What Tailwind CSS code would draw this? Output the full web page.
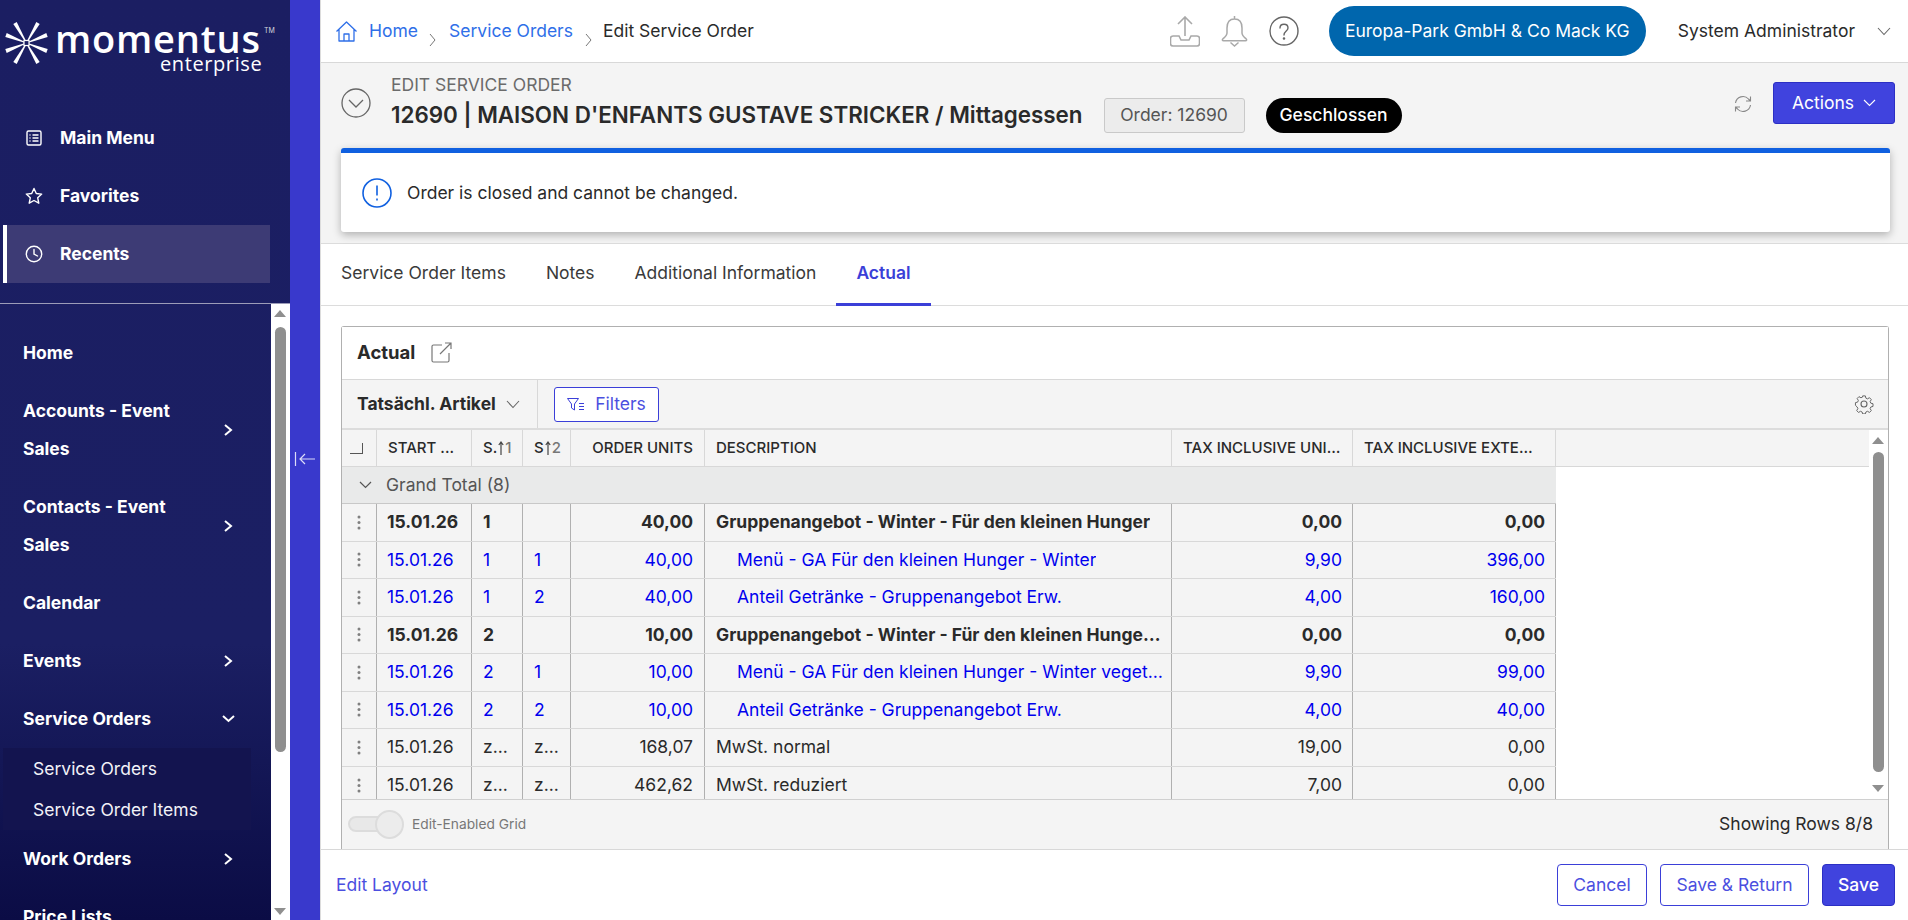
<!DOCTYPE html>
<html lang="en">
<head>
<meta charset="UTF-8" />
<title>Edit Service Order</title>
<script src="https://cdn.jsdelivr.net/npm/@tailwindcss/browser@4"></script>
</head>
<body class="h-[920px] overflow-hidden bg-white font-['Inter',sans-serif] text-[17.5px] text-[#2a2a2a]">
<div class="flex h-[920px] w-[1908px]">

  <!-- sidebar -->
  <aside class="flex h-full w-[290px] shrink-0 flex-col bg-gradient-to-b from-[#1b1e62] via-[#1b1f63] via-70% to-[#0b0c45] text-white">
    <div class="relative h-[87px] shrink-0">
      <svg class="absolute left-0 top-0" width="54" height="70" viewBox="0 0 54 70" fill="#fff">
        <g>
          <polygon points="13.300,24 16.700,22 26.900,42.800 26.100,43.200" />
          <polygon points="5.300,36.900 6.700,33.100 26.700,42.800 26.300,43.200" />
          <polygon points="39.700,24 36.300,22 26.100,42.800 26.900,43.200" />
          <polygon points="47.700,36.900 46.300,33.100 26.300,42.800 26.700,43.200" />
          <polygon points="13.300,62 16.700,64 26.900,43.200 26.100,42.800" />
          <polygon points="5.300,49.100 6.700,52.900 26.700,43.200 26.300,42.800" />
          <polygon points="39.700,62 36.300,64 26.100,43.200 26.900,42.800" />
          <polygon points="47.700,49.100 46.300,52.900 26.300,43.200 26.700,42.800" />
        </g>
        <rect x="24" y="40.500" width="5" height="5" fill="#1b1e62" stroke="#fff" stroke-width="1.2" />
      </svg>
      <span class="absolute left-[55px] top-[13px] font-['Open_Sans',sans-serif] text-[38px] leading-[50px] font-semibold tracking-[0.8px]">momentus</span>
      <span class="absolute left-[264px] top-[27px] text-[7px] leading-[8px] text-gray-300">TM</span>
      <span class="absolute left-[160px] top-[50px] font-['Open_Sans',sans-serif] text-[20px] leading-[28px] font-medium tracking-[0.6px]">enterprise</span>
    </div>
    <nav class="flex h-[216px] shrink-0 flex-col pt-[22px] pl-[3px] font-bold">
      <a class="flex h-[58px] w-[267px] items-center gap-[17px] pl-[22px]">
        <svg width="18" height="18" viewBox="0 0 18 18" fill="none" stroke="#fff" stroke-width="1.4"><rect x="2" y="2" width="14" height="14" rx="1.5"/><path d="M7.500 6h6M7.500 9h6M7.500 12h6M4.500 6h1M4.500 9h1M4.500 12h1"/></svg>
        Main Menu
      </a>
      <a class="flex h-[58px] w-[267px] items-center gap-[17px] pl-[22px]">
        <svg width="18" height="18" viewBox="0 0 18 18" fill="none" stroke="#fff" stroke-width="1.4" stroke-linejoin="round"><path d="M9 1.500l2.300 5 5.400.6-4 3.700 1.100 5.400L9 13.500l-4.800 2.700 1.100-5.400-4-3.700 5.400-.6z"/></svg>
        Favorites
      </a>
      <a class="flex h-[58px] w-[267px] items-center gap-[17px] border-l-4 border-white bg-[#3d3b75] pl-[18px]">
        <svg width="18" height="18" viewBox="0 0 18 18" fill="none" stroke="#fff" stroke-width="1.4" stroke-linecap="round"><circle cx="9" cy="9" r="7.700"/><path d="M9 4.500V9l3.500 2"/></svg>
        Recents
      </a>
    </nav>
    <div class="flex min-h-0 flex-1 border-t border-[#9c9cb8]">
      <div class="w-[271px] shrink-0 overflow-hidden pt-[20px] font-bold">
        <a class="flex h-[58px] items-center pl-[23px]">Home</a>
        <a class="flex h-[96px] items-center justify-between pl-[23px] pr-[38px] leading-[38px]"><span class="w-[170px]">Accounts - Event Sales</span>
          <svg width="10" height="14" viewBox="0 0 10 14" fill="none" stroke="#fff" stroke-width="2"><path d="M2 2l6 5-6 5"/></svg></a>
        <a class="flex h-[96px] items-center justify-between pl-[23px] pr-[38px] leading-[38px]"><span class="w-[170px]">Contacts - Event Sales</span>
          <svg width="10" height="14" viewBox="0 0 10 14" fill="none" stroke="#fff" stroke-width="2"><path d="M2 2l6 5-6 5"/></svg></a>
        <a class="flex h-[58px] items-center pl-[23px]">Calendar</a>
        <a class="flex h-[58px] items-center justify-between pl-[23px] pr-[38px]">Events
          <svg width="10" height="14" viewBox="0 0 10 14" fill="none" stroke="#fff" stroke-width="2"><path d="M2 2l6 5-6 5"/></svg></a>
        <a class="flex h-[58px] items-center justify-between pl-[23px] pr-[35px]">Service Orders
          <svg width="15" height="10" viewBox="0 0 15 10" fill="none" stroke="#fff" stroke-width="2"><path d="M2 2l5.500 5L13 2"/></svg></a>
        <div class="ml-[3px] h-[82px] w-[248px] bg-[#13144f] pl-[30px] pt-[1px] font-normal text-[#f2f2f8]">
          <div class="flex h-[41px] items-center">Service Orders</div>
          <div class="flex h-[40px] items-center">Service Order Items</div>
        </div>
        <a class="flex h-[58px] items-center justify-between pl-[23px] pr-[38px]">Work Orders
          <svg width="10" height="14" viewBox="0 0 10 14" fill="none" stroke="#fff" stroke-width="2"><path d="M2 2l6 5-6 5"/></svg></a>
        <a class="flex h-[58px] items-center pl-[23px]">Price Lists</a>
      </div>
      <div class="relative flex-1 bg-white">
        <div class="absolute left-[3px] top-[6px] h-0 w-0 border-x-[6.5px] border-b-[7px] border-x-transparent border-b-[#8f8f8f]"></div>
        <div class="absolute left-[4px] top-[23px] h-[425px] w-[11px] rounded-full bg-[#8f8f8f]"></div>
        <div class="absolute bottom-[5px] left-[3px] h-0 w-0 border-x-[6.5px] border-t-[7px] border-x-transparent border-t-[#8f8f8f]"></div>
      </div>
    </div>
  </aside>

  <!-- rail -->
  <div class="flex h-full w-[30px] shrink-0 flex-col items-center bg-[#3939cc] pt-[451px]">
    <svg width="22" height="16" viewBox="0 0 22 16" fill="none" stroke="#dcdcf8" stroke-width="1.2"><path d="M1.500 1v14M21 8H6M11 3L6 8l5 5"/></svg>
  </div>

  <!-- main -->
  <main class="flex h-full min-w-0 flex-1 flex-col border-l border-[#dcdcdc]">
    <header class="flex h-[63px] shrink-0 items-center border-b border-[#d8d8d8] pl-[14px] pr-[17px]">
      <svg class="mr-[11px]" width="23" height="23" viewBox="0 0 23 23" fill="none" stroke="#2f6fe8" stroke-width="1.3" stroke-linejoin="round"><path d="M1.500 11.500L11.500 2l10 9.500M4 9.500V21h15V9.500M9 21v-7h5v7"/></svg>
      <a class="text-[#2f6fe8]">Home</a>
      <svg class="ml-[11px] mr-[12px] mt-[18px]" width="8" height="14" viewBox="0 0 8 14" fill="none" stroke="#777" stroke-width="1"><path d="M1 1l5 6-5 6"/></svg>
      <a class="text-[#2f6fe8]">Service Orders</a>
      <svg class="ml-[12px] mr-[10px] mt-[18px]" width="8" height="14" viewBox="0 0 8 14" fill="none" stroke="#777" stroke-width="1"><path d="M1 1l5 6-5 6"/></svg>
      <span>Edit Service Order</span>
      <div class="ml-auto flex items-center">
        <svg width="30" height="31" viewBox="0 0 30 31" fill="none" stroke="#a9a9a9" stroke-width="1.6"><path d="M15 20V1M8 8l7-7 7 7M9 20H3a2.500 2.500 0 0 0-2.500 2.500v5A2.500 2.500 0 0 0 3 30h24a2.500 2.500 0 0 0 2.500-2.500v-5A2.500 2.500 0 0 0 27 20h-6l-2 4H11z"/></svg>
        <svg class="ml-[21px]" width="27" height="32" viewBox="0 0 27 32" fill="none" stroke="#a9a9a9" stroke-width="1.5"><path d="M13.500 1v3M13.500 4C8 4 6 8 6 13v5c0 2.500-2 4-4.200 6-.9.9-.4 1.800.7 1.800h22c1.100 0 1.600-.9.700-1.800C23 22 21 20.500 21 18v-5c0-5-2-9-7.500-9zM9.500 27.500l4 3.500 4-3.500"/></svg>
        <svg class="ml-[21px]" width="30" height="30" viewBox="0 0 30 30" fill="none" stroke="#666" stroke-width="1.4"><circle cx="15" cy="15" r="14"/><path d="M11 12c0-5 8-5 8 0 0 3-4 3-4 7" stroke-linecap="round"/><circle cx="15" cy="22.500" r=".6"/></svg>
        <div class="ml-[30px] flex h-[50px] w-[317px] items-center justify-center rounded-full bg-[#0066ad] text-white">Europa-Park GmbH &amp; Co Mack KG</div>
        <span class="ml-[32px]">System Administrator</span>
        <svg class="ml-[22px]" width="14" height="9" viewBox="0 0 14 9" fill="none" stroke="#666" stroke-width="1.1"><path d="M1 1l6 6.500L13 1"/></svg>
      </div>
    </header>

    <section class="h-[181px] shrink-0 border-b border-[#dcdcdc] bg-[#f4f4f4] pl-[20px] pr-[18px]">
      <div class="flex h-[85px] items-start">
        <svg class="mr-[20px] mt-[25px]" width="30" height="30" viewBox="0 0 30 30" fill="none" stroke="#666" stroke-width="1.3"><circle cx="15" cy="15" r="14"/><path d="M8 12l7 7 7-7"/></svg>
        <div class="pt-[12px]">
          <div class="leading-[20px] text-[#6b6b6b]">EDIT SERVICE ORDER</div>
          <h1 class="mt-[9px] text-[22.4px] leading-[22px] font-semibold">12690 | MAISON D'ENFANTS GUSTAVE STRICKER / Mittagessen</h1>
        </div>
        <span class="ml-[21px] mt-[35px] flex h-[35px] w-[141px] items-center justify-center rounded-[3px] border border-[#c9c9c9] bg-[#ececec] text-[#555]">Order: 12690</span>
        <span class="ml-[21px] mt-[35px] flex h-[35px] w-[136px] items-center justify-center rounded-full bg-black font-medium text-white">Geschlossen</span>
        <svg class="ml-auto mt-[32px]" width="18" height="18" viewBox="0 0 18 18" fill="none" stroke="#888" stroke-width="1.1"><path d="M1.500 8A7.500 7.500 0 0 1 14.500 4l2 2M16.500 1.500V6H12M16.500 10A7.500 7.500 0 0 1 3.500 14l-2-2M1.500 16.500V12H6"/></svg>
        <button class="-mr-[5px] ml-[21px] mt-[19px] flex h-[42px] w-[122px] items-center justify-center gap-[9px] rounded-[3px] border border-[#2c2fc4] bg-[#4043de] text-white">Actions
          <svg width="13" height="8" viewBox="0 0 13 8" fill="none" stroke="#fff" stroke-width="1.1"><path d="M1 1l5.500 5.500L12 1"/></svg></button>
      </div>
      <div class="flex h-[84px] items-center gap-[15px] rounded-[3px] border-t-[5px] border-[#1060e0] bg-white pl-[21px] shadow-[0_3px_8px_rgba(0,0,0,0.28)]">
        <svg width="30" height="30" viewBox="0 0 30 30" fill="none" stroke="#1060e0" stroke-width="1.6"><circle cx="15" cy="15" r="14"/><path d="M15 7.500v10M15 20.500v2"/></svg>
        <span class="mt-[2px]">Order is closed and cannot be changed.</span>
      </div>
    </section>

    <nav class="flex h-[62px] shrink-0 border-b border-[#dcdcdc] pb-[3px]">
      <a class="flex items-center px-[20px] text-[#3a3a3a]">Service Order Items</a>
      <a class="flex items-center px-[20px] text-[#3a3a3a]">Notes</a>
      <a class="flex items-center px-[20px] text-[#3a3a3a]">Additional Information</a>
      <a class="-mb-[4px] flex items-center border-b-[3px] border-[#3b3fd8] px-[20px] pb-[1px] font-semibold text-[#3b3fd8]">Actual</a>
    </nav>

    <section class="mx-[20px] mt-[20px] flex min-h-0 w-[1548px] flex-1 flex-col rounded-t-[3px] border-x border-t border-[#b0b0b0]">
      <div class="flex h-[53px] shrink-0 items-center border-b border-[#d8d8d8] bg-white pb-[1px] pl-[15px]">
        <span class="text-[18.5px] font-bold">Actual</span>
        <svg class="ml-[16px]" width="21" height="21" viewBox="0 0 21 21" fill="none" stroke="#777" stroke-width="1.2"><path d="M11 3H2.500A1.500 1.500 0 0 0 1 4.500v14A1.500 1.500 0 0 0 2.500 20h14a1.500 1.500 0 0 0 1.500-1.500V11M9 12L20 1M14 1h6v6"/></svg>
      </div>
      <div class="flex h-[50px] shrink-0 items-center border-b-2 border-[#dcdcdc] bg-[#f4f4f4]">
        <div class="flex h-full w-[196px] items-center border-r border-[#d8d8d8] pl-[15px]">
          <span class="font-bold">Tatsächl. Artikel</span>
          <svg class="ml-[10px]" width="14" height="9" viewBox="0 0 14 9" fill="none" stroke="#666" stroke-width="1.1"><path d="M1 1l6 6.500L13 1"/></svg>
        </div>
        <button class="ml-[16px] flex h-[35px] w-[105px] items-center justify-center gap-[10px] rounded-[3px] border border-[#3b3fd8] bg-white text-[#4b4fe0]">
          <svg width="18" height="13" viewBox="0 0 18 13" fill="none" stroke="#3b3fd8" stroke-width="1"><path d="M.5.500h11L7.500 6v6L4.500 10V6zM12 5.500h5M12 8.500h5M12 11.500h5"/></svg>
          Filters</button>
        <svg class="ml-auto mr-[14px]" width="20" height="20" viewBox="0 0 20 20" fill="none" stroke="#666" stroke-width="1.1"><circle cx="10" cy="10" r="3"/><path d="M8.500 1h3l.6 2.500 1.800.8 2.200-1.300 2 2.100-1.300 2.200.8 1.800 2.400.6v3l-2.400.6-.8 1.800 1.300 2.200-2 2.100-2.200-1.300-1.800.8-.6 2.100h-3l-.6-2.100-1.800-.8-2.200 1.300-2-2.100 1.300-2.200-.8-1.800L.5 11.500v-3l2.400-.6.8-1.800L2.400 3.900l2-2.100 2.200 1.300 1.800-.8z" transform="translate(1 1) scale(.9)"/></svg>
      </div>

      <div class="flex min-h-0 flex-1">
        <div class="min-w-0 flex-1 overflow-hidden bg-white">
          <!-- header row -->
          <div class="flex h-[37px] border-b border-[#d8d8d8] bg-[#f4f4f4] text-[15px] font-medium text-[#2a2a2a]">
            <div class="flex w-[35px] shrink-0 items-center justify-center border-r border-[#d8d8d8]"><div class="ml-[-5px] h-[11px] w-[13px] border-b-[1.5px] border-r-[1.5px] border-[#555]"></div></div>
            <div class="flex w-[95px] shrink-0 items-center border-r border-[#d8d8d8] pl-[11px]">START ...</div>
            <div class="flex w-[51px] shrink-0 items-center border-r border-[#d8d8d8] pl-[11px]">S.<svg class="mx-[1px]" width="6" height="14" viewBox="0 0 6 14" fill="none" stroke="#444" stroke-width="1.2"><path d="M3 14V1M.8 4L3 1l2.200 3"/></svg><span class="text-[#777]">1</span></div>
            <div class="flex w-[48px] shrink-0 items-center border-r border-[#d8d8d8] pl-[11px]">S<svg class="mx-[1px]" width="6" height="14" viewBox="0 0 6 14" fill="none" stroke="#444" stroke-width="1.2"><path d="M3 14V1M.8 4L3 1l2.200 3"/></svg><span class="text-[#777]">2</span></div>
            <div class="flex w-[134px] shrink-0 items-center justify-end border-r border-[#d8d8d8] pr-[11px]">ORDER UNITS</div>
            <div class="flex w-[467px] shrink-0 items-center border-r border-[#d8d8d8] pl-[11px]">DESCRIPTION</div>
            <div class="flex w-[181px] shrink-0 items-center border-r border-[#d8d8d8] pl-[11px] pr-[11px]"><span class="truncate">TAX INCLUSIVE UNIT PRICE</span></div>
            <div class="flex w-[203px] shrink-0 items-center border-r border-[#d8d8d8] pl-[11px] pr-[18px]"><span class="truncate">TAX INCLUSIVE EXTENDED PRICE</span></div>
          </div>
          <!-- group row -->
          <div class="flex h-[37px] w-[1214px] items-center gap-[14px] border-b border-[#c8c8c8] bg-[#e9eaea] pl-[17px] text-[#555]">
            <svg width="13" height="8" viewBox="0 0 13 8" fill="none" stroke="#555" stroke-width="1.2"><path d="M1 1l5.500 5.500L12 1"/></svg>
            <span>Grand Total (8)</span>
          </div>
          <!-- rows -->
          <div class="flex h-[37.5px] w-[1214px] items-center border-b border-[#d8d8d8] bg-[#f4f4f4] font-bold">
            <div class="flex h-full w-[35px] shrink-0 items-center justify-center border-r border-[#b0b0b0]"><svg width="4" height="15" viewBox="0 0 4 15" fill="#808080"><circle cx="2" cy="2" r="1.500"/><circle cx="2" cy="7.500" r="1.500"/><circle cx="2" cy="13" r="1.500"/></svg></div>
            <div class="flex h-full w-[95px] shrink-0 items-center border-r border-[#b0b0b0] pl-[10px]">15.01.26</div>
            <div class="flex h-full w-[51px] shrink-0 items-center border-r border-[#b0b0b0] pl-[11px]">1</div>
            <div class="flex h-full w-[48px] shrink-0 items-center border-r border-[#b0b0b0] pl-[11px]"></div>
            <div class="flex h-full w-[134px] shrink-0 items-center justify-end border-r border-[#b0b0b0] pr-[11px]">40,00</div>
            <div class="flex h-full w-[467px] shrink-0 items-center border-r border-[#b0b0b0] pl-[11px] pr-[8px]"><span class="truncate">Gruppenangebot - Winter - Für den kleinen Hunger</span></div>
            <div class="flex h-full w-[181px] shrink-0 items-center justify-end border-r border-[#b0b0b0] pr-[10px]">0,00</div>
            <div class="flex h-full w-[203px] shrink-0 items-center justify-end border-r border-[#b0b0b0] pr-[10px]">0,00</div>
          </div>
          <div class="flex h-[37.5px] w-[1214px] items-center border-b border-[#d8d8d8] bg-[#f4f4f4] text-[#0000ee]">
            <div class="flex h-full w-[35px] shrink-0 items-center justify-center border-r border-[#b0b0b0]"><svg width="4" height="15" viewBox="0 0 4 15" fill="#808080"><circle cx="2" cy="2" r="1.500"/><circle cx="2" cy="7.500" r="1.500"/><circle cx="2" cy="13" r="1.500"/></svg></div>
            <div class="flex h-full w-[95px] shrink-0 items-center border-r border-[#b0b0b0] pl-[10px]">15.01.26</div>
            <div class="flex h-full w-[51px] shrink-0 items-center border-r border-[#b0b0b0] pl-[11px]">1</div>
            <div class="flex h-full w-[48px] shrink-0 items-center border-r border-[#b0b0b0] pl-[11px]">1</div>
            <div class="flex h-full w-[134px] shrink-0 items-center justify-end border-r border-[#b0b0b0] pr-[11px]">40,00</div>
            <div class="flex h-full w-[467px] shrink-0 items-center border-r border-[#b0b0b0] pl-[32px] pr-[8px]"><span class="truncate">Menü - GA Für den kleinen Hunger - Winter</span></div>
            <div class="flex h-full w-[181px] shrink-0 items-center justify-end border-r border-[#b0b0b0] pr-[10px]">9,90</div>
            <div class="flex h-full w-[203px] shrink-0 items-center justify-end border-r border-[#b0b0b0] pr-[10px]">396,00</div>
          </div>
          <div class="flex h-[37.5px] w-[1214px] items-center border-b border-[#d8d8d8] bg-[#f4f4f4] text-[#0000ee]">
            <div class="flex h-full w-[35px] shrink-0 items-center justify-center border-r border-[#b0b0b0]"><svg width="4" height="15" viewBox="0 0 4 15" fill="#808080"><circle cx="2" cy="2" r="1.500"/><circle cx="2" cy="7.500" r="1.500"/><circle cx="2" cy="13" r="1.500"/></svg></div>
            <div class="flex h-full w-[95px] shrink-0 items-center border-r border-[#b0b0b0] pl-[10px]">15.01.26</div>
            <div class="flex h-full w-[51px] shrink-0 items-center border-r border-[#b0b0b0] pl-[11px]">1</div>
            <div class="flex h-full w-[48px] shrink-0 items-center border-r border-[#b0b0b0] pl-[11px]">2</div>
            <div class="flex h-full w-[134px] shrink-0 items-center justify-end border-r border-[#b0b0b0] pr-[11px]">40,00</div>
            <div class="flex h-full w-[467px] shrink-0 items-center border-r border-[#b0b0b0] pl-[32px] pr-[8px]"><span class="truncate">Anteil Getränke - Gruppenangebot Erw.</span></div>
            <div class="flex h-full w-[181px] shrink-0 items-center justify-end border-r border-[#b0b0b0] pr-[10px]">4,00</div>
            <div class="flex h-full w-[203px] shrink-0 items-center justify-end border-r border-[#b0b0b0] pr-[10px]">160,00</div>
          </div>
          <div class="flex h-[37.5px] w-[1214px] items-center border-b border-[#d8d8d8] bg-[#f4f4f4] font-bold">
            <div class="flex h-full w-[35px] shrink-0 items-center justify-center border-r border-[#b0b0b0]"><svg width="4" height="15" viewBox="0 0 4 15" fill="#808080"><circle cx="2" cy="2" r="1.500"/><circle cx="2" cy="7.500" r="1.500"/><circle cx="2" cy="13" r="1.500"/></svg></div>
            <div class="flex h-full w-[95px] shrink-0 items-center border-r border-[#b0b0b0] pl-[10px]">15.01.26</div>
            <div class="flex h-full w-[51px] shrink-0 items-center border-r border-[#b0b0b0] pl-[11px]">2</div>
            <div class="flex h-full w-[48px] shrink-0 items-center border-r border-[#b0b0b0] pl-[11px]"></div>
            <div class="flex h-full w-[134px] shrink-0 items-center justify-end border-r border-[#b0b0b0] pr-[11px]">10,00</div>
            <div class="flex h-full w-[467px] shrink-0 items-center border-r border-[#b0b0b0] pl-[11px] pr-[8px]"><span class="truncate">Gruppenangebot - Winter - Für den kleinen Hunger vegetarisch</span></div>
            <div class="flex h-full w-[181px] shrink-0 items-center justify-end border-r border-[#b0b0b0] pr-[10px]">0,00</div>
            <div class="flex h-full w-[203px] shrink-0 items-center justify-end border-r border-[#b0b0b0] pr-[10px]">0,00</div>
          </div>
          <div class="flex h-[37.5px] w-[1214px] items-center border-b border-[#d8d8d8] bg-[#f4f4f4] text-[#0000ee]">
            <div class="flex h-full w-[35px] shrink-0 items-center justify-center border-r border-[#b0b0b0]"><svg width="4" height="15" viewBox="0 0 4 15" fill="#808080"><circle cx="2" cy="2" r="1.500"/><circle cx="2" cy="7.500" r="1.500"/><circle cx="2" cy="13" r="1.500"/></svg></div>
            <div class="flex h-full w-[95px] shrink-0 items-center border-r border-[#b0b0b0] pl-[10px]">15.01.26</div>
            <div class="flex h-full w-[51px] shrink-0 items-center border-r border-[#b0b0b0] pl-[11px]">2</div>
            <div class="flex h-full w-[48px] shrink-0 items-center border-r border-[#b0b0b0] pl-[11px]">1</div>
            <div class="flex h-full w-[134px] shrink-0 items-center justify-end border-r border-[#b0b0b0] pr-[11px]">10,00</div>
            <div class="flex h-full w-[467px] shrink-0 items-center border-r border-[#b0b0b0] pl-[32px] pr-[8px]"><span class="truncate">Menü - GA Für den kleinen Hunger - Winter vegetarisch</span></div>
            <div class="flex h-full w-[181px] shrink-0 items-center justify-end border-r border-[#b0b0b0] pr-[10px]">9,90</div>
            <div class="flex h-full w-[203px] shrink-0 items-center justify-end border-r border-[#b0b0b0] pr-[10px]">99,00</div>
          </div>
          <div class="flex h-[37.5px] w-[1214px] items-center border-b border-[#d8d8d8] bg-[#f4f4f4] text-[#0000ee]">
            <div class="flex h-full w-[35px] shrink-0 items-center justify-center border-r border-[#b0b0b0]"><svg width="4" height="15" viewBox="0 0 4 15" fill="#808080"><circle cx="2" cy="2" r="1.500"/><circle cx="2" cy="7.500" r="1.500"/><circle cx="2" cy="13" r="1.500"/></svg></div>
            <div class="flex h-full w-[95px] shrink-0 items-center border-r border-[#b0b0b0] pl-[10px]">15.01.26</div>
            <div class="flex h-full w-[51px] shrink-0 items-center border-r border-[#b0b0b0] pl-[11px]">2</div>
            <div class="flex h-full w-[48px] shrink-0 items-center border-r border-[#b0b0b0] pl-[11px]">2</div>
            <div class="flex h-full w-[134px] shrink-0 items-center justify-end border-r border-[#b0b0b0] pr-[11px]">10,00</div>
            <div class="flex h-full w-[467px] shrink-0 items-center border-r border-[#b0b0b0] pl-[32px] pr-[8px]"><span class="truncate">Anteil Getränke - Gruppenangebot Erw.</span></div>
            <div class="flex h-full w-[181px] shrink-0 items-center justify-end border-r border-[#b0b0b0] pr-[10px]">4,00</div>
            <div class="flex h-full w-[203px] shrink-0 items-center justify-end border-r border-[#b0b0b0] pr-[10px]">40,00</div>
          </div>
          <div class="flex h-[37.5px] w-[1214px] items-center border-b border-[#d8d8d8] bg-[#f4f4f4]">
            <div class="flex h-full w-[35px] shrink-0 items-center justify-center border-r border-[#b0b0b0]"><svg width="4" height="15" viewBox="0 0 4 15" fill="#808080"><circle cx="2" cy="2" r="1.500"/><circle cx="2" cy="7.500" r="1.500"/><circle cx="2" cy="13" r="1.500"/></svg></div>
            <div class="flex h-full w-[95px] shrink-0 items-center border-r border-[#b0b0b0] pl-[10px]">15.01.26</div>
            <div class="flex h-full w-[51px] shrink-0 items-center border-r border-[#b0b0b0] pl-[11px]">z...</div>
            <div class="flex h-full w-[48px] shrink-0 items-center border-r border-[#b0b0b0] pl-[11px]">z...</div>
            <div class="flex h-full w-[134px] shrink-0 items-center justify-end border-r border-[#b0b0b0] pr-[11px]">168,07</div>
            <div class="flex h-full w-[467px] shrink-0 items-center border-r border-[#b0b0b0] pl-[11px] pr-[8px]"><span class="truncate">MwSt. normal</span></div>
            <div class="flex h-full w-[181px] shrink-0 items-center justify-end border-r border-[#b0b0b0] pr-[10px]">19,00</div>
            <div class="flex h-full w-[203px] shrink-0 items-center justify-end border-r border-[#b0b0b0] pr-[10px]">0,00</div>
          </div>
          <div class="flex h-[33px] w-[1214px] items-start bg-[#f4f4f4]">
            <div class="flex h-full w-[35px] shrink-0 items-start justify-center border-r border-[#b0b0b0] pt-[11px]"><svg width="4" height="15" viewBox="0 0 4 15" fill="#808080"><circle cx="2" cy="2" r="1.500"/><circle cx="2" cy="7.500" r="1.500"/><circle cx="2" cy="13" r="1.500"/></svg></div>
            <div class="h-full w-[95px] shrink-0 border-r border-[#b0b0b0] pl-[10px] pt-[5px]">15.01.26</div>
            <div class="h-full w-[51px] shrink-0 border-r border-[#b0b0b0] pl-[11px] pt-[5px]">z...</div>
            <div class="h-full w-[48px] shrink-0 border-r border-[#b0b0b0] pl-[11px] pt-[5px]">z...</div>
            <div class="h-full w-[134px] shrink-0 border-r border-[#b0b0b0] pr-[11px] pt-[5px] text-right">462,62</div>
            <div class="h-full w-[467px] shrink-0 border-r border-[#b0b0b0] px-[11px] pt-[5px]">MwSt. reduziert</div>
            <div class="h-full w-[181px] shrink-0 border-r border-[#b0b0b0] pr-[10px] pt-[5px] text-right">7,00</div>
            <div class="h-full w-[203px] shrink-0 border-r border-[#b0b0b0] pr-[10px] pt-[5px] text-right">0,00</div>
          </div>
        </div>
        <div class="relative w-[19px] shrink-0 bg-white">
          <div class="absolute left-[3px] top-[7px] h-0 w-0 border-x-[6.5px] border-b-[7px] border-x-transparent border-b-[#8f8f8f]"></div>
          <div class="absolute left-[4px] top-[22px] h-[320px] w-[11px] rounded-full bg-[#8f8f8f]"></div>
          <div class="absolute bottom-[7px] left-[3px] h-0 w-0 border-x-[6.5px] border-t-[7px] border-x-transparent border-t-[#8f8f8f]"></div>
        </div>
      </div>

      <div class="flex h-[50px] shrink-0 items-center border-t border-[#d0d0d0] bg-[#f4f4f4] pb-[1px] pl-[6px] pr-[15px]">
        <div class="relative h-[16px] w-[38px] rounded-full border-2 border-[#dcdcdc] bg-[#e8e8e8]">
          <div class="absolute left-[25px] top-[-8px] h-[29px] w-[29px] rounded-full border-2 border-[#dcdcdc] bg-[#ececec]"></div>
        </div>
        <span class="ml-[26px] text-[13.75px] text-[#777]">Edit-Enabled Grid</span>
        <span class="ml-auto text-[#2a2a2a]">Showing Rows 8/8</span>
      </div>
    </section>

    <footer class="flex h-[71px] shrink-0 items-center border-t border-[#d8d8d8] pl-[15px] pr-[13px]">
      <a class="text-[#4b4fe0]">Edit Layout</a>
      <button class="ml-auto h-[42px] w-[90px] rounded-[4px] border border-[#3b3fd8] bg-white text-[#4b4fe0]">Cancel</button>
      <button class="ml-[13px] h-[42px] w-[149px] rounded-[4px] border border-[#3b3fd8] bg-white text-[#4b4fe0]">Save &amp; Return</button>
      <button class="ml-[13px] h-[42px] w-[73px] rounded-[4px] border border-[#2c2fc4] bg-[#4043de] font-medium text-white">Save</button>
    </footer>
  </main>
</div>
</body>
</html>
